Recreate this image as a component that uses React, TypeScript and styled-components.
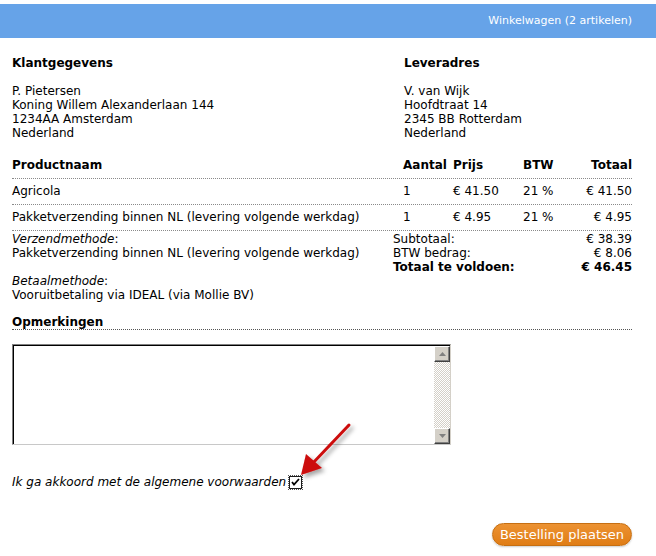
import React, { useState } from "react"
import styled, { createGlobalStyle } from "styled-components"

const GlobalStyle = createGlobalStyle`
  html, body {
    margin: 0;
    padding: 0;
    background: #fff;
  }
  body {
    font-family: Verdana, "DejaVu Sans", sans-serif;
    font-size: 12px;
    line-height: 14px;
    color: #000;
  }
`

const Page = styled.div`
  position: relative;
  width: 656px;
  height: 556px;
  padding-top: 4px;
  box-sizing: border-box;
`

const TopBar = styled.div`
  height: 34px;
  background: #66a3e8;
  display: flex;
  align-items: center;
  justify-content: flex-end;
  padding-right: 24px;
  color: #fff;
  font-size: 11px;
`

const Content = styled.div`
  padding: 18px 24px 0 12px;
`

const Addresses = styled.div`
  display: grid;
  grid-template-columns: 392px 1fr;
`

const Heading = styled.div`
  font-weight: bold;
  margin-bottom: 14px;
`

const Lines = styled.div`
  white-space: pre-line;
`

const ProductTable = styled.div`
  margin-top: 12px;
`

const Row = styled.div<{ $head?: boolean }>`
  display: grid;
  grid-template-columns: 391px 50px 70px 50px 1fr;
  padding: ${({ $head }) => ($head ? "6px 0 6px" : "5px 0 6px")};
  border-bottom: 1px dotted #8a8a8a;
  font-weight: ${({ $head }) => ($head ? "bold" : "normal")};
`

const Cell = styled.div<{ $right?: boolean }>`
  text-align: ${({ $right }) => ($right ? "right" : "left")};
  white-space: nowrap;
`

const Summary = styled.div`
  display: grid;
  grid-template-columns: 381px 1fr;
  padding-top: 1px;
`

const MethodBlock = styled.div`
  & + & {
    margin-top: 14px;
  }
`

const Label = styled.span`
  font-style: italic;
`

const TotalRow = styled.div<{ $strong?: boolean }>`
  display: flex;
  justify-content: space-between;
  font-weight: ${({ $strong }) => ($strong ? "bold" : "normal")};
`

const RemarkTitle = styled.div`
  margin-top: 13px;
  font-weight: bold;
  border-bottom: 1px dotted #555;
`

const TextBox = styled.div`
  margin-top: 14px;
  width: 439px;
  height: 101px;
  box-sizing: border-box;
  display: flex;
  border-top: 1px solid #808080;
  border-left: 1px solid #808080;
  border-right: 1px solid #d4d0c8;
  border-bottom: 1px solid #c8c8c8;
`

const Inner = styled.div`
  flex: 1;
  display: flex;
  border-top: 1px solid #000;
  border-left: 1px solid #000;
`

const Area = styled.textarea`
  flex: 1;
  border: none;
  outline: none;
  resize: none;
  overflow: hidden;
  padding: 2px;
  font-family: inherit;
  font-size: 12px;
`

const ScrollBar = styled.div`
  width: 16px;
  display: flex;
  flex-direction: column;
  background-color: #fff;
  background-image: repeating-conic-gradient(#d4d0c8 0 25%, #fff 0 50%);
  background-size: 2px 2px;
`

const ScrollButton = styled.div`
  width: 16px;
  height: 16px;
  box-sizing: border-box;
  background: #d4d0c8;
  border-top: 1px solid #fff;
  border-left: 1px solid #fff;
  border-right: 1px solid #404040;
  border-bottom: 1px solid #404040;
  box-shadow: inset -1px -1px 0 #808080;
  display: flex;
  align-items: center;
  justify-content: center;
`

const Track = styled.div`
  flex: 1;
`

const AgreeLine = styled.div`
  margin-top: 30px;
  display: flex;
  align-items: center;
  gap: 3px;
  font-style: italic;
`

const CheckBox = styled.div`
  width: 13px;
  height: 13px;
  box-sizing: border-box;
  border: 1px solid #1c1c1c;
  outline: 1px dotted #555;
  outline-offset: 0;
  background: #fff;
  display: flex;
  align-items: center;
  justify-content: center;
`

const Footer = styled.div`
  margin-top: 34px;
  display: flex;
  justify-content: flex-end;
`

const OrderButton = styled.button`
  width: 140px;
  height: 23px;
  border-radius: 12px;
  border: 1px solid #c66f12;
  background: linear-gradient(#ec9232, #e07d16);
  color: #fff;
  font-family: inherit;
  font-size: 13px;
  padding: 0;
  box-shadow: 0 1px 2px rgba(0, 0, 0, 0.2);
`

const ArrowOverlay = styled.svg`
  position: absolute;
  left: 290px;
  top: 416px;
  overflow: visible;
`

const Arrow = () => (
  <ArrowOverlay width="70" height="70" viewBox="0 0 70 70">
    <defs>
      <filter id="sh" x="-50%" y="-50%" width="200%" height="200%">
        <feDropShadow dx="3" dy="3" stdDeviation="2" floodColor="#000" floodOpacity="0.35" />
      </filter>
    </defs>
    <g filter="url(#sh)">
      <line x1="59" y1="9" x2="22" y2="48" stroke="#cc0a0a" strokeWidth="3" strokeLinecap="round" />
      <polygon points="11,59 16,38 32,52" fill="#cc0a0a" />
    </g>
  </ArrowOverlay>
)

const products = [
  { name: "Agricola", qty: "1", price: "€ 41.50", vat: "21 %", total: "€ 41.50" },
  {
    name: "Pakketverzending binnen NL (levering volgende werkdag)",
    qty: "1",
    price: "€ 4.95",
    vat: "21 %",
    total: "€ 4.95",
  },
]

export default function App() {
  const [agreed, setAgreed] = useState(true)
  const [remarks, setRemarks] = useState("")

  return (
    <Page>
      <GlobalStyle />
      <TopBar>Winkelwagen (2 artikelen)</TopBar>
      <Content>
        <Addresses>
          <div>
            <Heading>Klantgegevens</Heading>
            <Lines>{"P. Pietersen\nKoning Willem Alexanderlaan 144\n1234AA Amsterdam\nNederland"}</Lines>
          </div>
          <div>
            <Heading>Leveradres</Heading>
            <Lines>{"V. van Wijk\nHoofdtraat 14\n2345 BB Rotterdam\nNederland"}</Lines>
          </div>
        </Addresses>

        <ProductTable>
          <Row $head>
            <Cell>Productnaam</Cell>
            <Cell>Aantal</Cell>
            <Cell>Prijs</Cell>
            <Cell>BTW</Cell>
            <Cell $right>Totaal</Cell>
          </Row>
          {products.map((p) => (
            <Row key={p.name}>
              <Cell>{p.name}</Cell>
              <Cell>{p.qty}</Cell>
              <Cell>{p.price}</Cell>
              <Cell>{p.vat}</Cell>
              <Cell $right>{p.total}</Cell>
            </Row>
          ))}
        </ProductTable>

        <Summary>
          <div>
            <MethodBlock>
              <Label>Verzendmethode</Label>:<br />
              Pakketverzending binnen NL (levering volgende werkdag)
            </MethodBlock>
            <MethodBlock>
              <Label>Betaalmethode</Label>:<br />
              Vooruitbetaling via IDEAL (via Mollie BV)
            </MethodBlock>
          </div>
          <div>
            <TotalRow>
              <span>Subtotaal:</span>
              <span>€ 38.39</span>
            </TotalRow>
            <TotalRow>
              <span>BTW bedrag:</span>
              <span>€ 8.06</span>
            </TotalRow>
            <TotalRow $strong>
              <span>Totaal te voldoen:</span>
              <span>€ 46.45</span>
            </TotalRow>
          </div>
        </Summary>

        <RemarkTitle>Opmerkingen</RemarkTitle>
        <TextBox>
          <Inner>
            <Area value={remarks} onChange={(e) => setRemarks(e.target.value)} />
            <ScrollBar>
              <ScrollButton>
                <svg width="7" height="4" viewBox="0 0 7 4">
                  <polygon points="3.5,0 7,4 0,4" fill="#808080" />
                </svg>
              </ScrollButton>
              <Track />
              <ScrollButton>
                <svg width="7" height="4" viewBox="0 0 7 4">
                  <polygon points="0,0 7,0 3.5,4" fill="#808080" />
                </svg>
              </ScrollButton>
            </ScrollBar>
          </Inner>
        </TextBox>

        <AgreeLine>
          <span>Ik ga akkoord met de algemene voorwaarden</span>
          <CheckBox onClick={() => setAgreed(!agreed)}>
            {agreed && (
              <svg width="9" height="9" viewBox="0 0 9 9">
                <path d="M1 4 L3 6.5 L8 1" fill="none" stroke="#000" strokeWidth="1.8" />
              </svg>
            )}
          </CheckBox>
        </AgreeLine>

        <Footer>
          <OrderButton>Bestelling plaatsen</OrderButton>
        </Footer>
      </Content>
      <Arrow />
    </Page>
  )
}
